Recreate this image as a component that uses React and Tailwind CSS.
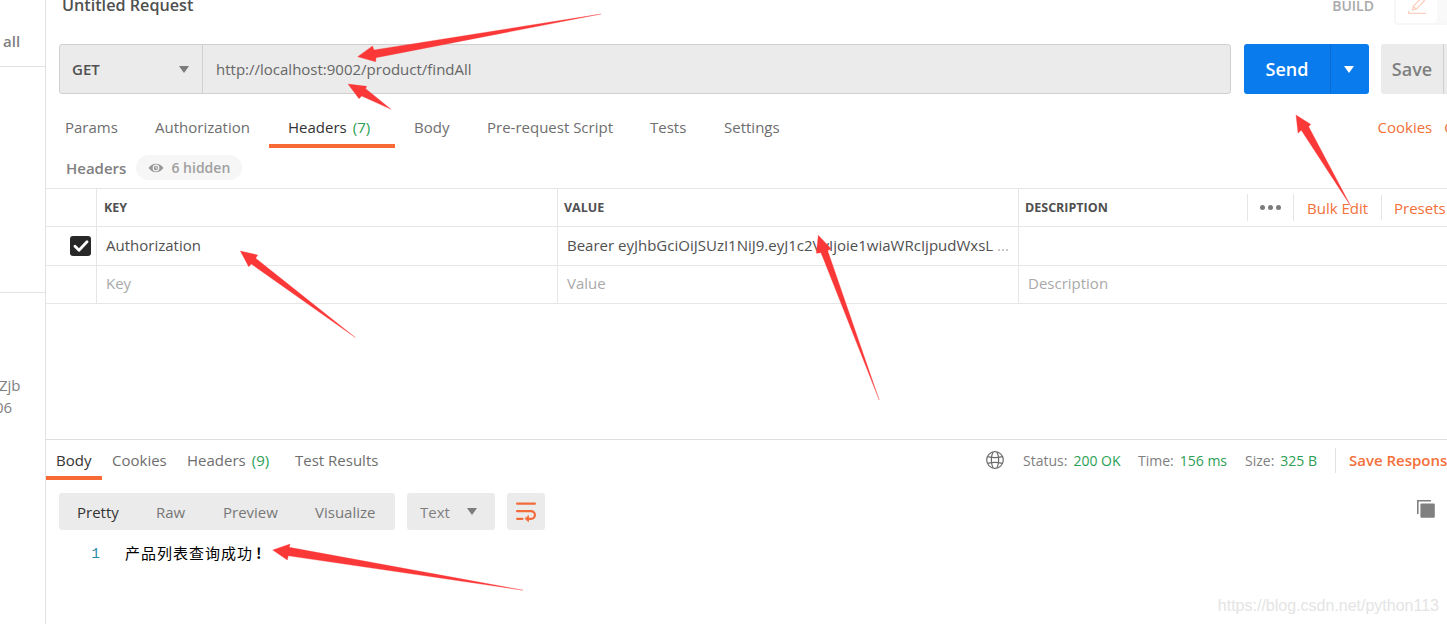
const REQUEST_TABS = [
    { label: 'Params', width: 'w-[90px]' },
    { label: 'Authorization', width: 'w-[133px]' },
    { label: 'Headers', count: 7, width: 'w-[126px]', active: true },
    { label: 'Body', width: 'w-[73px]' },
    { label: 'Pre-request Script', width: 'w-[163px]' },
    { label: 'Tests', width: 'w-[74px]' },
    { label: 'Settings', width: 'w-[94px]' },
];

const RESPONSE_TABS = [
    { label: 'Body', width: 'w-[56px]', active: true },
    { label: 'Cookies', width: 'w-[75px]' },
    { label: 'Headers', count: 9, width: 'w-[108px]' },
    { label: 'Test Results', width: 'w-[104px]' },
];

const VIEWS = [
    { label: 'Pretty', width: 'w-[79px]', active: true },
    { label: 'Raw', width: 'w-[67px]' },
    { label: 'Preview', width: 'w-[92px]' },
    { label: 'Visualize', width: 'w-[80px]' },
];

const RESPONSE_STATS = [
    { label: 'Status:', value: '200 OK', width: 'w-[115px]' },
    { label: 'Time:', value: '156 ms', width: 'w-[107px]' },
    { label: 'Size:', value: '325 B', width: 'w-[90px]' },
];

const ARROWS = [
    '357.7,56.7 372.5,46 374,50 601,14 376,57.7 375.7,61.7',
    '348,84 366.7,86.3 365.7,88.7 391,109.3 361.7,96 359,98.7',
    '1296,115 1310.7,124.3 1308.7,126.7 1351,206.5 1301.3,130.3 1298,133',
    '240.3,251 257.7,255 255.7,258.3 355.3,337.5 251.3,264 248.7,266.7',
    '818.3,235.3 831,248.7 827.7,250.7 879.2,400 821,252.7 816.3,253.3',
    '272.7,550 290,544 289.3,547.3 523,590.2 288.3,555.8 287.3,560',
];

function Caret({ className }) {
    return (
        <svg viewBox="0 0 10 7" className={`w-[10px] h-[7px] ${className}`} fill="currentColor">
            <path d="M0 0h10L5 7z" />
        </svg>
    );
}

function EyeIcon() {
    return (
        <svg viewBox="0 0 16 10" className="w-4 h-[10px]" fill="none">
            <path d="M.6 5C4.5-.6 11.5-.6 15.4 5C11.5 10.6 4.5 10.6 .6 5Z" fill="#969696" />
            <circle cx="8" cy="5" r="2.8" stroke="#f6f6f6" strokeWidth="1.2" />
            <path d="M8 3.4V5.2h1.6" stroke="#f6f6f6" strokeWidth="0.9" />
        </svg>
    );
}

function PencilIcon() {
    return (
        <svg viewBox="0 0 18 18" className="w-[18px] h-[18px]" fill="none" stroke="#fbd0c0" strokeWidth="1.3">
            <path d="M4.5 13l.8-3.6L13.6 1l2.8 2.8L8.1 12.2zM5.3 9.4l2.8 2.8" />
            <path d="M.7 14v2.4H18" />
        </svg>
    );
}

function GlobeIcon() {
    return (
        <svg viewBox="0 0 18 18" className="w-[18px] h-[18px]" fill="none" stroke="#6b6b6b" strokeWidth="1.2">
            <circle cx="9" cy="9" r="8.3" />
            <path d="M7 1C4.8 5.5 4.8 12.5 7 17M11 1c2.2 4.5 2.2 11.5 0 16" />
            <path d="M1.6 5.6C6 6.8 12 6.8 16.4 5.6M1.6 12.4C6 11.2 12 11.2 16.4 12.4" />
        </svg>
    );
}

function WrapIcon() {
    return (
        <svg viewBox="0 0 20 20" className="w-5 h-5" fill="none" stroke="#f26b3a" strokeWidth="2.2" strokeLinecap="round">
            <path d="M1.1 1.7h17.8M1.1 9.2h14a3.8 3.8 0 0 1 0 7.6h-2.4M1.1 16.8h5.4" />
            <path d="M12.5 13.8v6L9.2 16.8z" fill="#f26b3a" strokeWidth="0.8" />
        </svg>
    );
}

function CopyIcon() {
    return (
        <svg viewBox="0 0 18 18" className="w-[18px] h-[18px]">
            <path d="M.8 14V.8H14" fill="none" stroke="#808080" strokeWidth="1.6" />
            <rect x="3.4" y="3.4" width="14.4" height="14.4" rx="1" fill="#808080" />
        </svg>
    );
}

function Tab({ tab, pad }) {
    return (
        <div className={`${tab.width} ${pad} pt-1 shrink-0 h-full flex items-center whitespace-nowrap border-b-4 ${tab.active ? 'border-[#f76935] text-[#333]' : 'border-transparent text-[#6e6e6e]'}`}>
            {tab.label}
            {tab.count && <span className="ml-[6px] text-[#2ca055]">({tab.count})</span>}
        </div>
    );
}

function Sidebar() {
    return (
        <aside className="w-[46px] shrink-0 h-full border-r border-[#e2e2e2] text-[15px] leading-[22px] text-[#808080] overflow-hidden">
            <div className="h-[67px] border-b border-[#e2e2e2] pl-[3px] pt-[30px] font-semibold">all</div>
            <div className="h-[226px] border-b border-[#e2e2e2]" />
            <div className="pt-[81px] -ml-[1px]">
                <p>Zjb</p>
                <p className="-ml-[4px]">06</p>
            </div>
        </aside>
    );
}

function UrlBar() {
    return (
        <div className="h-[50px] shrink-0 flex pl-[13px]">
            <div className="w-[1172px] shrink-0 flex border border-[#d0d0d0] rounded-[3px] bg-[#ebebeb] text-[#666]">
                <div className="w-[143px] flex items-center justify-between pl-3 pr-[13px] border-r border-[#d0d0d0]">
                    <span className="pt-px text-[15px] font-semibold text-[#505050]">GET</span>
                    <Caret className="text-[#7b7b7b]" />
                </div>
                <div className="flex items-center pl-[13px]">http://localhost:9002/product/findAll</div>
            </div>
            <div className="ml-[13px] w-[125px] shrink-0 flex rounded-[3px] bg-[#097bed] text-white">
                <div className="w-[87px] flex items-center justify-center border-r border-[#0a6cd0] text-lg font-semibold">Send</div>
                <div className="flex-1 flex items-center justify-center pr-[2px]">
                    <Caret className="text-white" />
                </div>
            </div>
            <div className="ml-3 w-[80px] shrink-0 flex rounded-[3px] bg-[#ebebeb] text-[#808080]">
                <div className="w-[63px] flex items-center justify-center border-r border-[#d0d0d0] text-lg font-semibold">Save</div>
            </div>
        </div>
    );
}

function HeadersTable() {
    return (
        <div className="w-[1420px] shrink-0 grid grid-cols-[51px_461px_461px_1fr] grid-rows-[38px_39px_38px] border-t border-[#e6e6e6] text-[#505050] *:border-b *:border-r *:border-[#e6e6e6] *:flex *:items-center">
            <div />
            <div className="pl-[7px] pt-[2px] text-[12.5px] font-bold">KEY</div>
            <div className="pl-[6px] pt-[2px] text-[12.5px] font-bold">VALUE</div>
            <div className="pl-[6px]">
                <span className="w-[222px] pt-[2px] text-[12.5px] font-bold">DESCRIPTION</span>
                <div className="w-[47px] h-[27px] flex items-center justify-center gap-[3px] border-x border-[#e6e6e6]">
                    <i className="w-[5px] h-[5px] rounded-full bg-[#7b7b7b]" />
                    <i className="w-[5px] h-[5px] rounded-full bg-[#7b7b7b]" />
                    <i className="w-[5px] h-[5px] rounded-full bg-[#7b7b7b]" />
                </div>
                <span className="w-[87px] pl-[13px] pt-[2px] text-[#f3703a] whitespace-nowrap">Bulk Edit</span>
                <span className="h-[25px] flex items-center border-l border-[#e6e6e6] pl-3 pt-[2px] text-[#f3703a]">Presets</span>
            </div>

            <div className="pl-6">
                <div className="w-[21px] h-[20px] rounded-[3px] bg-[#282828] flex items-center justify-center">
                    <svg viewBox="0 0 16 12" className="w-4 h-3" fill="none" stroke="#fff" strokeWidth="2.8" strokeLinecap="round" strokeLinejoin="round">
                        <path d="M2 6.3l4 3.9L14 1.8" />
                    </svg>
                </div>
            </div>
            <div className="pl-[9px] pb-[2px]">Authorization</div>
            <div className="pl-[9px] pb-[2px] whitespace-nowrap">
                Bearer eyJhbGciOiJSUzI1NiJ9.eyJ1c2VyIjoie1wiaWRcIjpudWxsL
                <span className="ml-1 text-[#b0b0b0]">...</span>
            </div>
            <div />

            <div />
            <div className="pl-[9px] pb-[2px] text-[#a9a9a9]">Key</div>
            <div className="pl-[9px] pb-[2px] text-[#a9a9a9]">Value</div>
            <div className="pl-[9px] pb-[2px] text-[#a9a9a9]">Description</div>
        </div>
    );
}

function ResponsePane() {
    return (
        <section className="border-t border-[#dedede]">
            <div className="h-10 flex">
                {RESPONSE_TABS.map((tab) => (
                    <Tab key={tab.label} tab={tab} pad="pl-[10px]" />
                ))}
                <div className="ml-[597px] shrink-0 flex items-center h-[41px] text-sm text-[#808080]">
                    <span className="w-[37px] pb-px"><GlobeIcon /></span>
                    {RESPONSE_STATS.map((s) => (
                        <div key={s.label} className={`${s.width} flex gap-[6px] whitespace-nowrap`}>
                            {s.label}
                            <span className="text-[#2ca055]">{s.value}</span>
                        </div>
                    ))}
                    <div className="h-[25px] flex items-center border-l border-[#e2e2e2] pl-[13px] text-[15px] font-semibold text-[#f3703a] whitespace-nowrap">Save Response</div>
                </div>
            </div>

            <div className="mt-[13px] h-[37px] flex gap-3 pl-[13px]">
                <div className="w-[336px] flex items-center pl-[18px] pt-[2px] rounded-[3px] bg-[#ebebeb]">
                    {VIEWS.map((v) => (
                        <span key={v.label} className={`${v.width} ${v.active ? 'text-[#333]' : 'text-[#777]'}`}>{v.label}</span>
                    ))}
                </div>
                <div className="w-[88px] flex items-center justify-between pl-[13px] pr-[18px] rounded-[3px] bg-[#ebebeb] text-[#808080]">
                    <span className="pt-[2px]">Text</span>
                    <Caret className="text-[#7b7b7b]" />
                </div>
                <div className="w-[38px] flex items-center justify-center rounded-[3px] bg-[#ebebeb]">
                    <WrapIcon />
                </div>
                <div className="ml-[860px] pt-[7px]">
                    <CopyIcon />
                </div>
            </div>

            <div className="mt-3 h-6 flex items-center">
                <span className="w-[54px] text-right text-sm text-[#2387a8] font-['Liberation_Mono',monospace]">1</span>
                <span className="ml-[25px] pb-[2px] text-[15px] tracking-[1px] text-black font-['Noto_Sans_CJK_SC',sans-serif]">
                    产品列表查询成功<b className="ml-[3px]">!</b>
                </span>
            </div>
        </section>
    );
}

export default function App() {
    return (
        <div className="relative w-[1447px] h-[624px] flex overflow-hidden bg-white text-[15px] font-['Open_Sans','Noto_Sans_CJK_SC',sans-serif]">
            <Sidebar />
            <main className="w-[1401px] shrink-0 flex flex-col overflow-hidden">
                <div className="h-11 shrink-0 flex justify-between pl-4">
                    <h1 className="-mt-[7px] text-[16.2px] font-semibold text-[#505050]">Untitled Request</h1>
                    <div className="flex">
                        <span className="-mt-1 mr-5 text-sm font-semibold text-[#a9a9a9]">BUILD</span>
                        <div className="w-[53px] h-[25px] border-l-2 border-b-2 border-[#f7f7f7] rounded-bl bg-[#f9f9f9]">
                            <div className="w-[41px] h-[23px] flex items-start justify-center rounded-b bg-white">
                                <div className="-mt-[3px]"><PencilIcon /></div>
                            </div>
                        </div>
                    </div>
                </div>

                <UrlBar />

                <div className="h-[54px] shrink-0 flex pt-[13px]">
                    {REQUEST_TABS.map((tab) => (
                        <Tab key={tab.label} tab={tab} pad="pl-[19px]" />
                    ))}
                    <div className="ml-[578.5px] flex items-center gap-3 pb-px text-[#f3703a]">
                        <span>Cookies</span>
                        <span>Code</span>
                    </div>
                </div>

                <div className="h-10 shrink-0 flex items-center pl-5 gap-[10px]">
                    <span className="font-semibold text-[#808080]">Headers</span>
                    <div className="h-[25px] w-[106px] -mt-px flex items-center justify-center gap-[7px] rounded-full bg-[#f6f6f6] text-sm font-semibold text-[#a0a0a0]">
                        <EyeIcon />
                        6 hidden
                    </div>
                </div>

                <HeadersTable />

                <div className="h-[135px] shrink-0" />
                <ResponsePane />
            </main>

            {/* Annotation arrows and watermark */}
            <svg viewBox="0 0 1447 624" className="absolute inset-0 w-full h-full pointer-events-none" fill="#fb3838" stroke="#fb3838" strokeWidth="0.3" strokeLinejoin="bevel">
                {ARROWS.map((points) => (
                    <polygon key={points} points={points} />
                ))}
            </svg>
            <span className="absolute right-[8px] bottom-[6px] text-base text-[#e4e4e4] font-['Liberation_Sans',sans-serif]">https://blog.csdn.net/python113</span>
        </div>
    );
}
